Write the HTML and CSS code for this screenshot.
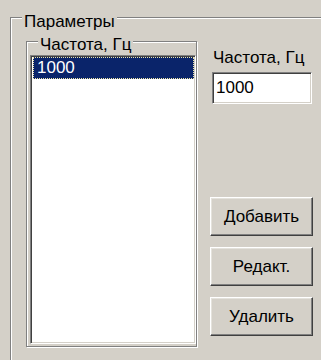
FILE: index.html
```html
<!DOCTYPE html>
<html lang="ru">
<head>
    <meta charset="UTF-8">
    <title>Параметры</title>
    <link rel="stylesheet" href="styles.css">
</head>
<body>
    <div class="group outer-group">
        <span class="group-title outer-title">Параметры</span>
        <div class="group-row">
            <div class="group inner-group">
                <span class="group-title inner-title">Частота, Гц</span>
                <ul class="list-box">
                    <li class="list-item selected">1000</li>
                </ul>
            </div>
            <div class="side-panel">
                <label class="field-label" for="freq">Частота, Гц</label>
                <input class="edit-box" type="text" id="freq" value="1000">
                <div class="button-stack">
                    <button class="win-button" type="button">Добавить</button>
                    <button class="win-button" type="button">Редакт.</button>
                    <button class="win-button" type="button">Удалить</button>
                </div>
            </div>
        </div>
    </div>
</body>
</html>
```

FILE: styles.css
```css
html, body {
    margin: 0;
    height: 100%;
    overflow: hidden;
}
body {
    background-color: #d4d0c8;
    font-family: "Liberation Sans", Arial, sans-serif;
    font-size: 17px;
    color: #000;
}
.group {
    border: 1px solid #808080;
    box-shadow: inset 1px 1px #fff, 1px 1px #fff;
    box-sizing: border-box;
}
.group-title {
    display: block;
    width: max-content;
    line-height: 17px;
    padding: 0 2px;
    background-color: #d4d0c8;
}
/* the outer frame runs on past the right and bottom edges of the window */
.outer-group {
    margin: 17px 0 0 10px;
    width: 311px;
    height: 343px;
    padding-left: 15px;
    border-right: none;
    border-bottom: none;
    box-shadow: inset 1px 1px #fff;
}
.outer-title {
    margin: -5px 0 0 -4px;
}
.group-row {
    display: flex;
    margin-top: 11px;
}
.inner-group {
    width: 171px;
    height: 306px;
    padding: 0 0 2px 3px;
    display: flex;
    flex-direction: column;
}
.inner-title {
    margin: -6px 0 0 8px;
}
.list-box {
    list-style: none;
    margin: 2px 0 0 0;
    padding: 1px 1px 1px 2px;
    flex: 1;
    background-color: #fff;
    border: 1px solid;
    border-color: #808080 #fff #fff #808080;
    box-shadow: inset 1px 1px #404040, inset -1px -1px #d4d0c8;
}
.list-item {
    height: 22px;
    line-height: 20px;
    padding-left: 3px;
    box-sizing: border-box;
}
.list-item.selected {
    background-color: #0a246a;
    color: #fff;
    border: 1px dotted #efe6a8;
}
.side-panel {
    margin-left: 13px;
    padding-top: 8px;
    display: flex;
    flex-direction: column;
    align-items: flex-start;
}
.field-label {
    line-height: 17px;
    margin-left: 3px;
}
.edit-box {
    margin: 6px 0 0 2px;
    width: 100px;
    height: 32px;
    box-sizing: border-box;
    padding: 0 3px;
    font: inherit;
    color: #000;
    background-color: #fff;
    border: 1px solid;
    border-color: #808080 #fff #fff #808080;
    box-shadow: inset 1px 1px #404040, inset -1px -1px #d4d0c8;
    outline: none;
}
.button-stack {
    margin-top: 93px;
    display: flex;
    flex-direction: column;
    gap: 11px;
}
.win-button {
    width: 103px;
    height: 39px;
    padding: 0;
    font: inherit;
    color: #000;
    background-color: #d4d0c8;
    border: 1px solid;
    border-color: #fff #404040 #404040 #fff;
    box-shadow: inset -1px -1px #808080, inset 1px 1px #e4e2dc;
    cursor: pointer;
}
```
